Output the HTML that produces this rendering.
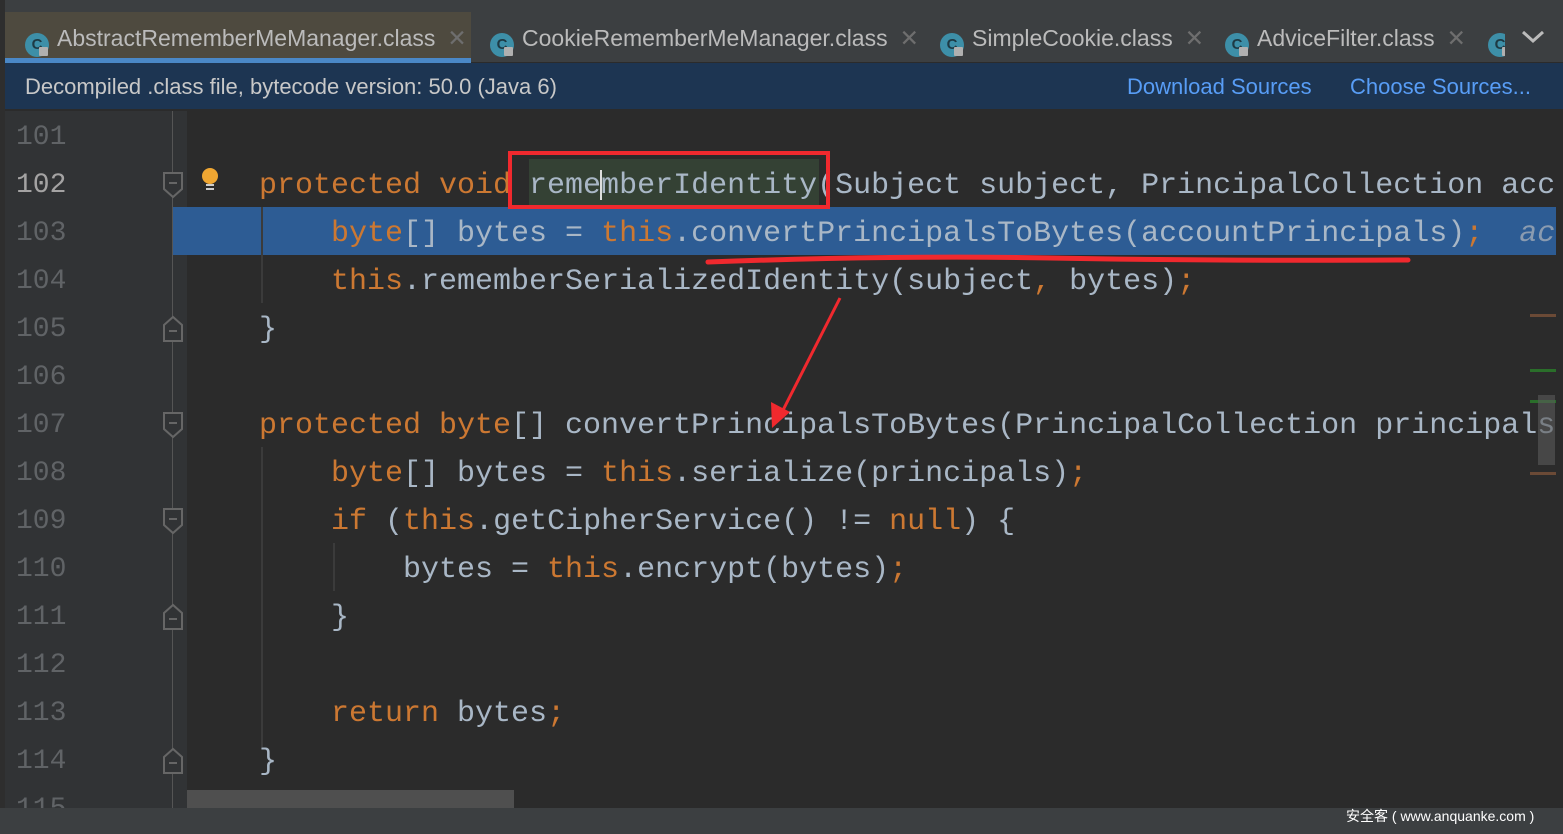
<!DOCTYPE html>
<html><head><meta charset="utf-8"><style>
body{margin:0;width:1563px;height:834px;overflow:hidden;background:#2b2b2b;position:relative;font-family:"Liberation Sans",sans-serif}
.abs{position:absolute}
#top{left:0;top:0;width:1563px;height:12px;background:#3c3f41}
#tabs{left:5px;top:12px;width:1563px;height:50px;background:#3c3f41}
.tab{position:absolute;top:13px;height:50px;font-size:23px;color:#bbbbbb;line-height:50px;white-space:nowrap}
.ic{display:inline-block;width:24px;height:24px;border-radius:50%;background:#3d8fa8;vertical-align:-3px;margin-right:8px;color:#1e3a44;font-size:15px;line-height:24px;text-align:center;font-weight:bold;position:relative}
.ic:after{content:"";position:absolute;left:14px;top:14px;width:9px;height:9px;background:#b0b0b0;border-radius:1px}
.x{color:#6e6e6e;margin-left:12px}
#info{left:5px;top:63px;width:1563px;height:46px;background:#1d3552;color:#c8c8c8;font-size:22px;line-height:48px}
#gutter{left:5px;top:111px;width:182px;height:697px;background:#313335}
.ln{position:absolute;left:16px;font-family:"Liberation Mono",monospace;font-size:28px;color:#606366;height:48px;line-height:54px}
.code{position:absolute;left:259px;font-family:"Liberation Mono",monospace;font-size:30px;color:#a9b7c6;height:48px;line-height:54px;white-space:pre}
.k{color:#cc7832}
#status{left:0;top:808px;width:1563px;height:26px;background:#3c3f41}
</style></head><body>
<div id="top" class="abs"></div>
<div id="tabs" class="abs"></div>
<div class="abs" style="left:5px;top:12px;width:466px;height:50px;background:#4e4a3f"></div>
<div class="abs" style="left:5px;top:58px;width:466px;height:5px;background:#4a88c7"></div>
<div class="tab" style="left:25px"><span class="ic">C</span>AbstractRememberMeManager.class<span class="x">✕</span></div>
<div class="tab" style="left:490px"><span class="ic">C</span>CookieRememberMeManager.class<span class="x">✕</span></div>
<div class="tab" style="left:940px"><span class="ic">C</span>SimpleCookie.class<span class="x">✕</span></div>
<div class="tab" style="left:1225px"><span class="ic">C</span>AdviceFilter.class<span class="x">✕</span></div>
<div class="tab" style="left:1488px;width:17px;overflow:hidden"><span class="ic">C</span></div>
<div class="abs" style="left:1505px;top:12px;width:58px;height:50px;background:#3c3f41"></div>
<svg class="abs" style="left:1520px;top:28px" width="26" height="18"><path d="M3 4 L13 13 L23 4" stroke="#bbb" stroke-width="3" fill="none"/></svg>
<div id="info" class="abs"><span style="margin-left:20px">Decompiled .class file, bytecode version: 50.0 (Java 6)</span>
<span style="position:absolute;left:1122px;color:#589df6">Download Sources</span>
<span style="position:absolute;left:1345px;color:#589df6">Choose Sources...</span></div>
<div class="abs" style="left:0;top:0;width:5px;height:834px;background:#2e2e2e"></div>
<div id="gutter" class="abs"></div>
<div class="abs" style="left:172px;top:111px;width:1px;height:697px;background:#555"></div>
<div class="abs" style="left:173px;top:207px;width:1383px;height:48px;background:#2d5c94"></div>
<div class="abs" style="left:261px;top:207px;width:2px;height:96px;background:#3b3b3b"></div>
<div class="abs" style="left:261px;top:447px;width:2px;height:300px;background:#3b3b3b"></div>
<div class="abs" style="left:333px;top:543px;width:2px;height:48px;background:#3b3b3b"></div>
<div class="abs" style="left:529px;top:159px;width:290px;height:48px;background:#344134"></div>
<div class="ln" style="top:111px">101</div>
<div class="ln" style="top:159px;color:#a4a3a3">102</div>
<div class="ln" style="top:207px">103</div>
<div class="ln" style="top:255px">104</div>
<div class="ln" style="top:303px">105</div>
<div class="ln" style="top:351px">106</div>
<div class="ln" style="top:399px">107</div>
<div class="ln" style="top:447px">108</div>
<div class="ln" style="top:495px">109</div>
<div class="ln" style="top:543px">110</div>
<div class="ln" style="top:591px">111</div>
<div class="ln" style="top:639px">112</div>
<div class="ln" style="top:687px">113</div>
<div class="ln" style="top:735px">114</div>
<div class="ln" style="top:783px;height:25px;overflow:hidden">115</div>
<svg class="abs" style="left:160px;top:159px" width="28" height="640">
<g stroke="#666" stroke-width="2" fill="#313335">
<path d="M4 14 H22 V30 L13 38 L4 30 Z"/><path d="M9 24 H17"/>
<path d="M4 166 L13 158 L22 166 V182 H4 Z"/><path d="M9 172 H17"/>
<path d="M4 254 H22 V270 L13 278 L4 270 Z"/><path d="M9 264 H17"/>
<path d="M4 350 H22 V366 L13 374 L4 366 Z"/><path d="M9 360 H17"/>
<path d="M4 454 L13 446 L22 454 V470 H4 Z"/><path d="M9 460 H17"/>
<path d="M4 598 L13 590 L22 598 V614 H4 Z"/><path d="M9 604 H17"/>
</g></svg>
<svg class="abs" style="left:198px;top:166px" width="24" height="28"><circle cx="12" cy="10" r="8" fill="#f0a732"/><rect x="8" y="18" width="8" height="2" fill="#ccc"/><rect x="8" y="22" width="8" height="2" fill="#ccc"/></svg>
<div class="code" style="top:159px"><span class="k">protected void</span> rememberIdentity(Subject subject, PrincipalCollection acc</div>
<div class="code" style="top:207px">    <span class="k">byte</span>[] bytes = <span class="k">this</span>.convertPrincipalsToBytes(accountPrincipals)<span class="k">;</span>  <i style="color:#8a9bb0">ac</i></div>
<div class="code" style="top:255px">    <span class="k">this</span>.rememberSerializedIdentity(subject<span class="k">,</span> bytes)<span class="k">;</span></div>
<div class="code" style="top:303px">}</div>
<div class="code" style="top:399px"><span class="k">protected byte</span>[] convertPrincipalsToBytes(PrincipalCollection principals</div>
<div class="code" style="top:447px">    <span class="k">byte</span>[] bytes = <span class="k">this</span>.serialize(principals)<span class="k">;</span></div>
<div class="code" style="top:495px">    <span class="k">if</span> (<span class="k">this</span>.getCipherService() != <span class="k">null</span>) {</div>
<div class="code" style="top:543px">        bytes = <span class="k">this</span>.encrypt(bytes)<span class="k">;</span></div>
<div class="code" style="top:591px">    }</div>
<div class="code" style="top:687px">    <span class="k">return</span> bytes<span class="k">;</span></div>
<div class="code" style="top:735px">}</div>
<div class="abs" style="left:600px;top:170px;width:2px;height:30px;background:#ddd"></div>
<div class="abs" style="left:1556px;top:111px;width:7px;height:697px;background:#2b2b2b"></div>
<div class="abs" style="left:1530px;top:314px;width:26px;height:3px;background:#6b4a36"></div>
<div class="abs" style="left:1530px;top:369px;width:26px;height:3px;background:#2a6e2a"></div>
<div class="abs" style="left:1530px;top:400px;width:26px;height:3px;background:#2a6e2a"></div>
<div class="abs" style="left:1530px;top:472px;width:26px;height:3px;background:#6b4a36"></div>
<div class="abs" style="left:1538px;top:395px;width:17px;height:70px;background:rgba(90,90,90,0.6)"></div>
<div class="abs" style="left:187px;top:790px;width:327px;height:18px;background:#4f4f4f"></div>
<div class="abs" style="left:508px;top:151px;width:314px;height:50px;border:4px solid #f0292e"></div>
<svg class="abs" style="left:0;top:0" width="1563" height="834">
<path d="M708 262 Q900 255 1050 258 T1408 260" stroke="#f0292e" stroke-width="5" stroke-linecap="round" fill="none"/>
<path d="M840 298 L778 420" stroke="#f0292e" stroke-width="3" fill="none"/>
<path d="M772 428 L771 402 L790 412 Z" fill="#f0292e"/>
</svg>
<div id="status" class="abs"></div>
<div class="abs" style="left:1346px;top:806px;font-size:14px;color:#fff;font-family:'Liberation Sans','Noto Sans CJK SC',sans-serif">安全客 ( www.anquanke.com )</div>
</body></html>
